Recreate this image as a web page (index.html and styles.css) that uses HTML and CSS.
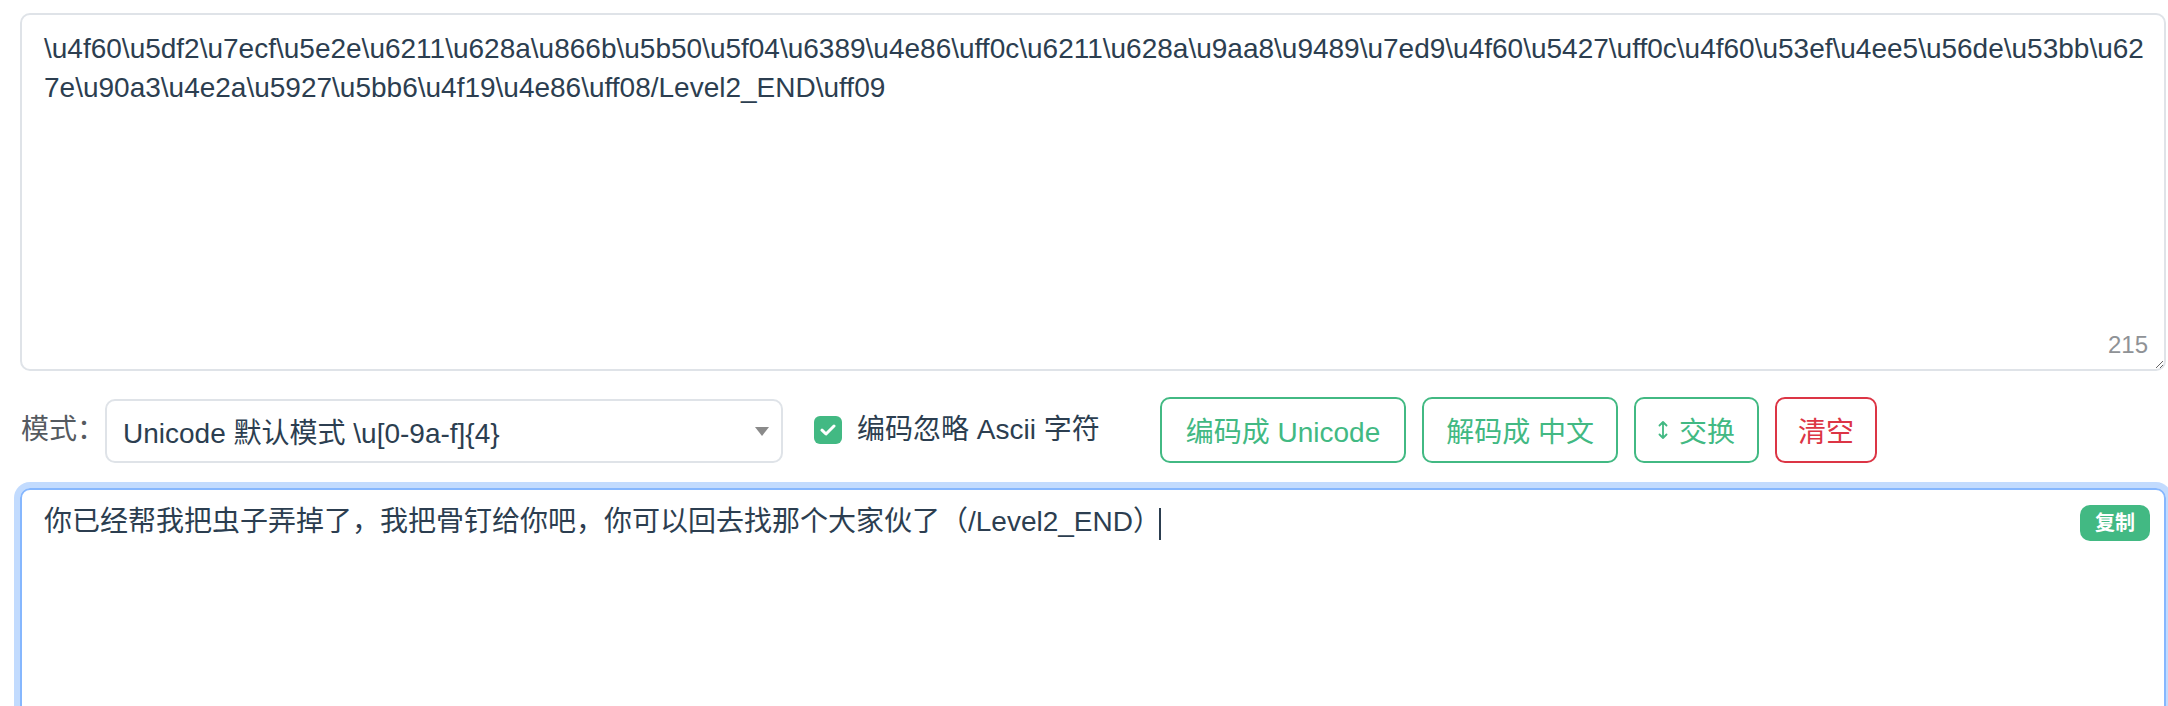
FILE: index.html
```html
<!DOCTYPE html>
<html lang="zh-CN">
<head>
<meta charset="utf-8">
<title>Unicode 编码转换</title>
<link rel="stylesheet" href="styles.css">
</head>
<body>
<div class="page">
  <div class="input-wrap">
    <textarea class="source" spellcheck="false">\u4f60\u5df2\u7ecf\u5e2e\u6211\u628a\u866b\u5b50\u5f04\u6389\u4e86\uff0c\u6211\u628a\u9aa8\u9489\u7ed9\u4f60\u5427\uff0c\u4f60\u53ef\u4ee5\u56de\u53bb\u627e\u90a3\u4e2a\u5927\u5bb6\u4f19\u4e86\uff08/Level2_END\uff09</textarea>
    <span class="count">215</span>
  </div>

  <div class="toolbar">
    <span class="mode-label">模式：</span>
    <div class="select">
      <span class="select-value">Unicode 默认模式 \u[0-9a-f]{4}</span>
      <svg class="select-arrow" width="14" height="9" viewBox="0 0 14 9"><path d="M0 0H14L7 9Z" fill="#8a8a8a"/></svg>
    </div>
    <label class="check">
      <span class="check-box"><svg width="16" height="12" viewBox="0 0 16 12"><path d="M2 6.2L6 10L14 2" fill="none" stroke="#fff" stroke-width="3" stroke-linecap="round" stroke-linejoin="round"/></svg></span>
      <span class="check-text">编码忽略 Ascii 字符</span>
    </label>
    <div class="buttons">
      <button class="btn btn-green btn-wide">编码成 Unicode</button>
      <button class="btn btn-green">解码成 中文</button>
      <button class="btn btn-green"><svg class="swap-icon" width="10" height="18" viewBox="0 0 10 18"><path d="M5 1V17M1.5 4.5L5 1L8.5 4.5M1.5 13.5L5 17L8.5 13.5" fill="none" stroke="#42b983" stroke-width="1.8" stroke-linecap="round" stroke-linejoin="round"/></svg>交换</button>
      <button class="btn btn-red btn-narrow">清空</button>
    </div>
  </div>

  <div class="output">
    <span class="output-text">你已经帮我把虫子弄掉了，我把骨钉给你吧，你可以回去找那个大家伙了（/Level2_END）</span><span class="caret"></span>
    <span class="copy">复制</span>
  </div>
</div>
</body>
</html>
```

FILE: styles.css
```css
html, body {
  margin: 0;
  padding: 0;
  background: #fff;
  overflow: hidden;
}

body {
  font-family: "Liberation Sans", "Noto Sans CJK SC", sans-serif;
  color: #2c3e50;
}

.page {
  padding: 13px 2px 0 20px;
}

.input-wrap {
  position: relative;
}

.source {
  display: block;
  box-sizing: border-box;
  width: 100%;
  height: 358px;
  margin: 0;
  padding: 14px 8px 12px 22px;
  border: 2px solid #dfe3e8;
  border-radius: 10px;
  font-family: "Liberation Sans", "Noto Sans CJK SC", sans-serif;
  font-size: 28px;
  line-height: 39px;
  color: #2c3e50;
  background: #fff;
  resize: both;
  outline: none;
  overflow: hidden;
}

.count {
  position: absolute;
  right: 18px;
  bottom: 12px;
  font-size: 24px;
  line-height: 28px;
  color: #8f9296;
}

.toolbar {
  display: flex;
  align-items: center;
  margin-top: 26px;
  padding-left: 1px;
  height: 66px;
}

.mode-label {
  font-size: 28px;
  line-height: 40px;
  color: #555a60;
  width: 84px;
  white-space: nowrap;
}

.select {
  box-sizing: border-box;
  width: 678px;
  height: 64px;
  display: flex;
  align-items: center;
  justify-content: space-between;
  padding: 0 12px 0 16px;
  border: 2px solid #dfe3e8;
  border-radius: 10px;
  font-size: 28px;
  color: #2c3e50;
  margin-top: 2px;
}

.select-arrow {
  display: block;
}

.check {
  display: flex;
  align-items: center;
  margin-left: 31px;
}

.check-box {
  width: 28px;
  height: 28px;
  border-radius: 6px;
  background: #42b983;
  display: flex;
  align-items: center;
  justify-content: center;
}

.check-box svg {
  display: block;
}

.check-text {
  margin-left: 15px;
  font-size: 28px;
  line-height: 40px;
  color: #2c3e50;
  white-space: nowrap;
}

.buttons {
  display: flex;
  gap: 16px;
  margin-left: 60px;
}

.btn {
  box-sizing: border-box;
  height: 66px;
  display: inline-flex;
  align-items: center;
  padding: 0 22px;
  background: #fff;
  border: 2px solid;
  border-radius: 10px;
  font-family: "Liberation Sans", "Noto Sans CJK SC", sans-serif;
  font-size: 28px;
  white-space: nowrap;
  cursor: pointer;
}

.btn-wide {
  padding: 0 24px;
}

.btn-narrow {
  padding: 0 21px;
}

.btn-green {
  color: #42b983;
  border-color: #42b983;
}

.btn-red {
  color: #dc3545;
  border-color: #dc3545;
}

.swap-icon {
  display: block;
  margin-right: 11px;
}

.output {
  position: relative;
  box-sizing: border-box;
  margin-top: 25px;
  height: 400px;
  padding: 12px 22px;
  border: 2px solid #86b7fe;
  border-radius: 10px;
  box-shadow: 0 0 0 6px rgba(13, 110, 253, 0.25);
  font-size: 28px;
  line-height: 40px;
  color: #2c3e50;
}

.caret {
  display: inline-block;
  width: 2px;
  height: 32px;
  margin-left: -2px;
  background: #2c3e50;
  vertical-align: middle;
}

.copy {
  position: absolute;
  top: 15px;
  right: 14px;
  width: 70px;
  height: 36px;
  box-sizing: border-box;
  display: flex;
  align-items: center;
  justify-content: center;
  background: #42b983;
  color: #fff;
  border-radius: 10px;
  font-size: 20px;
  font-weight: bold;
  line-height: 1;
}
```
